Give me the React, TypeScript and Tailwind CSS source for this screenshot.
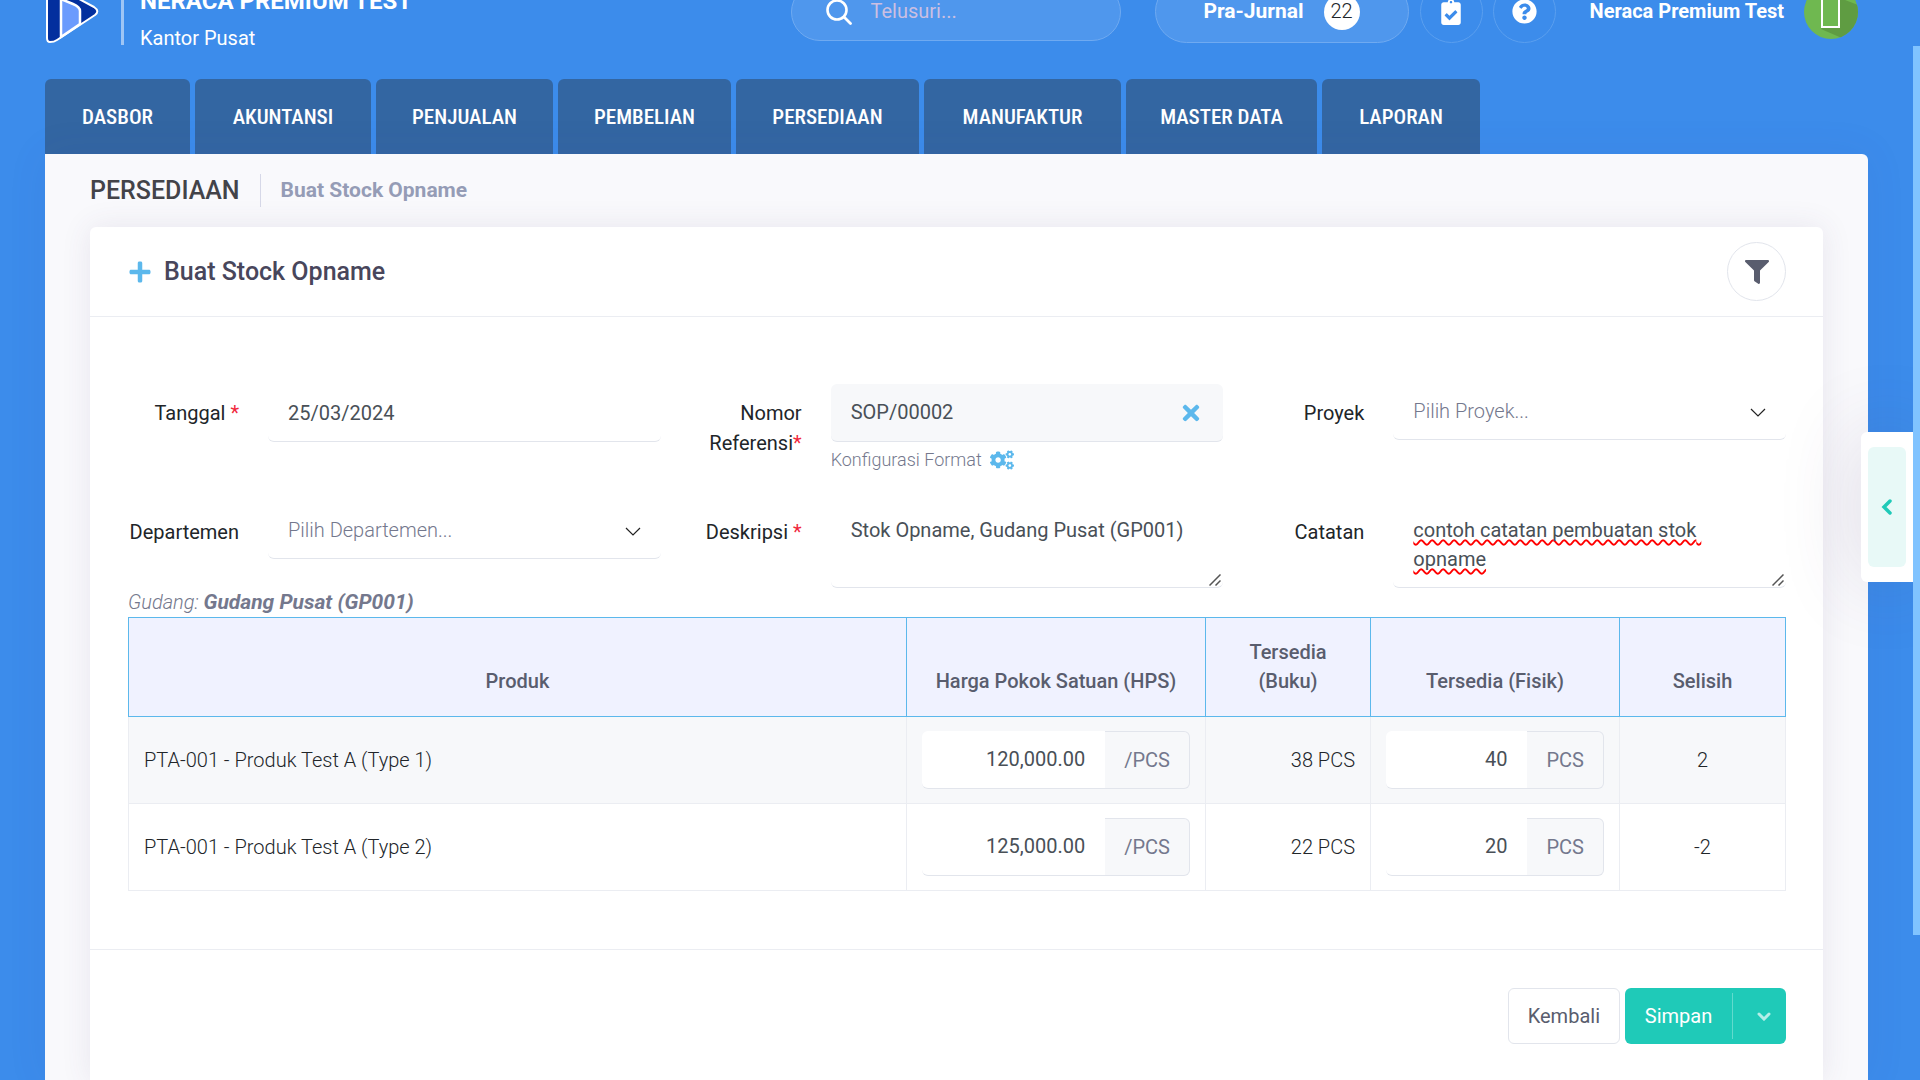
import React from 'react';
import { FaPlus, FaFilter, FaTimes, FaCogs, FaQuestionCircle, FaClipboardCheck } from 'react-icons/fa';

const menuItems = [
  { label: 'DASBOR', width: 'w-[145px]' },
  { label: 'AKUNTANSI', width: 'w-[176px]' },
  { label: 'PENJUALAN', width: 'w-[177px]' },
  { label: 'PEMBELIAN', width: 'w-[173px]' },
  { label: 'PERSEDIAAN', width: 'w-[183px]' },
  { label: 'MANUFAKTUR', width: 'w-[197px]' },
  { label: 'MASTER DATA', width: 'w-[191px]' },
  { label: 'LAPORAN', width: 'w-[158px]' },
];

const rows = [
  { name: 'PTA-001 - Produk Test A (Type 1)', price: '120,000.00', book: '38 PCS', actual: '40', diff: '2' },
  { name: 'PTA-001 - Produk Test A (Type 2)', price: '125,000.00', book: '22 PCS', actual: '20', diff: '-2' },
];

const Logo: React.FC = () => (
  <svg viewBox="0 0 54 72" className="w-[54px] h-[72px] shrink-0" aria-hidden="true">
    <path
      d="M2 15Q2 9 8 12L49 34Q55 38 50 42L12 67Q9 69 5 69Q2 69 2 65Z"
      fill="#032f9e"
      stroke="#fff"
      strokeWidth="2"
      strokeLinejoin="round"
    />
    <path d="M16 64V26L28 31Q35 34 35 38V51Z" fill="#6b9bfd" stroke="#fff" strokeWidth="2.5" />
  </svg>
);

const Avatar: React.FC = () => (
  <svg viewBox="0 0 54 54" className="size-[54px] shrink-0" aria-hidden="true">
    <clipPath id="avatar-clip">
      <circle cx="27" cy="27" r="27" />
    </clipPath>
    <g clipPath="url(#avatar-clip)">
      <rect width="54" height="54" fill="#6fb850" />
      <path d="M36 13L54 20V54H40L17 44Z" fill="#5f9c42" />
      <rect x="17" y="6" width="19" height="37" fill="#fff" />
      <rect x="19" y="10" width="15" height="31" fill="#6fb850" />
    </g>
  </svg>
);

const ResizeGrip: React.FC = () => (
  <svg viewBox="0 0 12 12" className="pointer-events-none absolute bottom-[2px] right-[2px] size-3" aria-hidden="true">
    <path d="M0.5 11.5L11.5 0.5M6.5 11.5L11.5 6.5" fill="none" stroke="#555" strokeWidth="1.5" />
  </svg>
);

const Required: React.FC = () => <span className="text-[#f0283c]">*</span>;

type FieldProps = {
  id: string;
  label: React.ReactNode;
  children: React.ReactNode;
};

const Field: React.FC<FieldProps> = ({ id, label, children }) => (
  <div className="flex gap-[29px]">
    <label htmlFor={id} className="w-[111px] shrink-0 pt-[14px] text-right leading-[30px] text-[#212529]">
      {label}
    </label>
    <div className="relative min-w-0 flex-1">{children}</div>
  </div>
);

type DropdownProps = { id: string; placeholder: string };

const Dropdown: React.FC<DropdownProps> = ({ id, placeholder }) => (
  <div className="relative">
    <select
      id={id}
      className="h-14 w-full appearance-none rounded-md border-b border-[#e2e5ec] bg-white px-5 font-light text-[#74788d] outline-none"
    >
      <option>{placeholder}</option>
    </select>
    <svg viewBox="0 0 16 10" className="pointer-events-none absolute right-5 top-6 h-[10px] w-4" aria-hidden="true">
      <path d="M1 1L8 8L15 1" fill="none" stroke="#222" strokeWidth="1.2" />
    </svg>
  </div>
);

type QuantityProps = { label: string; value: string; unit: string };

const Quantity: React.FC<QuantityProps> = ({ label, value, unit }) => (
  <div className="flex h-[58px]">
    <input
      aria-label={label}
      defaultValue={value}
      className="w-0 min-w-0 flex-1 rounded-l-md border-b border-[#e2e5ec] bg-white pr-5 text-right text-[#495057] outline-none"
    />
    <span className="flex items-center rounded-r-md border-y border-r border-[#e2e5ec] bg-[#f7f8fa] px-[19px] text-[#74788d]">
      {unit}
    </span>
  </div>
);

export default function App() {
  return (
    <div className="relative flex h-screen flex-col overflow-hidden bg-[#3c8ceb] pl-[45px] pr-[52px] font-[Roboto,sans-serif] text-[20px] leading-[29px]">
      {/* Header */}
      <header className="-mt-5 flex items-start text-white">
        <div className="flex items-start pb-[27px]">
          <div className="-mt-[7px]">
            <Logo />
          </div>
          <div className="ml-[22px] h-[65px] w-[3px] bg-[#9ec5f5]" />
          <div className="ml-4 flex flex-col gap-[9px] pt-[7px] leading-7">
            <strong className="text-[24px] font-bold">NERACA PREMIUM TEST</strong>
            <span>Kantor Pusat</span>
          </div>
        </div>
        <div className="ml-auto mr-[10px] flex h-[63px] items-center">
          <label className="mr-[34px] flex h-[58px] w-[330px] items-center rounded-full border border-[#6faaf1] bg-[#4f97ed] pl-[34px]">
            <svg viewBox="0 0 26 26" className="size-[26px] shrink-0" aria-hidden="true">
              <circle cx="11" cy="11" r="9.5" fill="none" stroke="#fff" strokeWidth="2.6" />
              <path d="M18 18L24.5 24.5" stroke="#fff" strokeWidth="2.8" strokeLinecap="round" />
            </svg>
            <input
              aria-label="Telusuri"
              placeholder="Telusuri..."
              className="ml-[19px] w-0 flex-1 bg-transparent outline-none placeholder:text-[#cbbfe2]"
            />
          </label>
          <button className="mr-[11px] flex h-[63px] w-[254px] items-center justify-center gap-5 rounded-full border border-[#6faaf1] bg-[#4f97ed] text-[21px] font-bold">
            Pra-Jurnal
            <span className="flex size-9 items-center justify-center rounded-full bg-white text-[20px] font-light text-[#212529]">22</span>
          </button>
          <button aria-label="Tugas" className="mr-[10px] flex size-[63px] items-center justify-center rounded-full border border-[#5a9fef]">
            <FaClipboardCheck size={26} />
          </button>
          <button aria-label="Bantuan" className="mr-[34px] flex size-[63px] items-center justify-center rounded-full border border-[#5a9fef]">
            <FaQuestionCircle size={25} />
          </button>
          <span className="mr-5 font-bold">Neraca Premium Test</span>
          <Avatar />
        </div>
      </header>

      {/* Menu */}
      <nav className="flex gap-[5px] font-['Roboto_Condensed','Liberation_Sans_Narrow',Roboto,sans-serif] text-[21px] font-medium text-white">
        {menuItems.map((item) => (
          <a
            key={item.label}
            href="#"
            className={`flex h-[75px] items-center justify-center whitespace-nowrap rounded-t-md bg-[#3366a2] pt-[2px] ${item.width}`}
          >
            {item.label}
          </a>
        ))}
      </nav>

      {/* Content */}
      <main className="flex flex-1 flex-col rounded-tr-md bg-[#f9f9fc] px-[45px] shadow-[0_0_40px_rgba(60,60,160,0.08)]">
        <div className="flex h-[73px] shrink-0 items-center">
          <h1 className="text-[25px] font-medium text-[#434349]">PERSEDIAAN</h1>
          <div className="mx-5 h-[33px] w-px bg-[#d6d8e8]" />
          <span className="text-[21px] font-bold text-[#959cb6]">Buat Stock Opname</span>
        </div>

        <section className="flex-1 rounded-t-md bg-white shadow-[0_0_30px_rgba(82,63,105,0.1)]">
          <div className="flex h-[90px] items-center border-b border-[#ebedf2] pl-[38px] pr-[37px]">
            <FaPlus size={24} color="#5cb8ec" />
            <h2 className="ml-3 text-[25px] font-medium text-[#48465b]">Buat Stock Opname</h2>
            <button aria-label="Filter" className="ml-auto flex size-[59px] items-center justify-center rounded-full border border-[#e2e5ec]">
              <FaFilter size={24} color="#595d6e" />
            </button>
          </div>

          <form className="border-b border-[#ebedf2] pb-[58px] pl-[38px] pr-[37px] pt-[67px]">
            <div className="grid grid-cols-3 gap-x-[30px]">
              <Field id="tanggal" label={<>Tanggal <Required /></>}>
                <input
                  id="tanggal"
                  defaultValue="25/03/2024"
                  className="h-[58px] w-full rounded-md border-b border-[#e2e5ec] px-5 text-[#495057] outline-none"
                />
              </Field>
              <Field id="nomor" label={<>Nomor Referensi<Required /></>}>
                <div className="flex h-[58px] items-center rounded-md border-b border-[#e2e5ec] bg-[#f7f8fa] px-5">
                  <input id="nomor" defaultValue="SOP/00002" className="min-w-0 flex-1 bg-transparent text-[#495057] outline-none" />
                  <button type="button" aria-label="Hapus nomor">
                    <FaTimes size={24} color="#5cb8ec" />
                  </button>
                </div>
                <a href="#" className="mt-[3px] flex items-center gap-2 text-[18px] font-light text-[#74788d]">
                  Konfigurasi Format
                  <FaCogs size={24} color="#5cb8ec" />
                </a>
              </Field>
              <Field id="proyek" label="Proyek">
                <Dropdown id="proyek" placeholder="Pilih Proyek..." />
              </Field>
            </div>

            <div className="mt-[29px] grid grid-cols-3 gap-x-[30px]">
              <Field id="departemen" label="Departemen">
                <Dropdown id="departemen" placeholder="Pilih Departemen..." />
              </Field>
              <Field id="deskripsi" label={<>Deskripsi <Required /></>}>
                <textarea
                  id="deskripsi"
                  defaultValue="Stok Opname, Gudang Pusat (GP001)"
                  className="block h-[85px] w-full resize-none rounded-md border-b border-[#e2e5ec] px-5 pt-[13px] text-[#495057] outline-none"
                />
                <ResizeGrip />
              </Field>
              <Field id="catatan" label="Catatan">
                <textarea
                  id="catatan"
                  defaultValue="contoh catatan pembuatan stok opname"
                  className="block h-[85px] w-full resize-none rounded-md border-b border-[#e2e5ec] px-5 pt-[13px] text-[#495057] underline decoration-[#ff0000] decoration-wavy decoration-2 underline-offset-2 outline-none [text-decoration-skip-ink:none]"
                />
                <ResizeGrip />
              </Field>
            </div>

            <p className="font-light italic text-[#74788d]">
              Gudang: <strong className="text-[21px] font-bold">Gudang Pusat (GP001)</strong>
            </p>
            <table className="w-full table-fixed border-collapse font-light text-[#212529]">
              <thead>
                <tr className="bg-[#f0f2ff] align-bottom text-[#595d6e] [&>th]:border [&>th]:border-[#5cb8ec] [&>th]:px-[15px] [&>th]:py-5 [&>th]:font-medium">
                  <th>Produk</th>
                  <th className="w-[299px]">Harga Pokok Satuan (HPS)</th>
                  <th className="w-[165px]">
                    Tersedia
                    <br />
                    (Buku)
                  </th>
                  <th className="w-[249px]">Tersedia (Fisik)</th>
                  <th className="w-[166px]">Selisih</th>
                </tr>
              </thead>
              <tbody>
                {rows.map((row) => (
                  <tr key={row.name} className="odd:bg-[#f7f8fa] [&>td]:border [&>td]:border-[#ebedf2] [&>td]:px-[15px] [&>td]:py-[14px]">
                    <td>{row.name}</td>
                    <td className="font-normal">
                      <Quantity label="Harga Pokok Satuan" value={row.price} unit="/PCS" />
                    </td>
                    <td className="text-right">{row.book}</td>
                    <td className="font-normal">
                      <Quantity label="Tersedia (Fisik)" value={row.actual} unit="PCS" />
                    </td>
                    <td className="text-center">{row.diff}</td>
                  </tr>
                ))}
              </tbody>
            </table>
          </form>

          {/* Action */}
          <div className="flex justify-end gap-[5px] px-[37px] py-[38px]">
            <button className="h-14 rounded-md border border-[#e2e5ec] px-[19px] text-[#595d6e]">Kembali</button>
            <div className="flex h-14 items-center rounded-md bg-[#1fcab8] text-white">
              <button className="h-full w-[107px]">Simpan</button>
              <div className="h-[46px] w-px bg-[#62dacd]" />
              <button aria-label="Opsi simpan" className="flex h-full w-[53px] items-center justify-center pl-2">
                <svg viewBox="0 0 14 9" className="h-[9px] w-[14px]" aria-hidden="true">
                  <path d="M2 2L7 7L12 2" fill="none" stroke="#b5eee8" strokeWidth="3" strokeLinecap="round" />
                </svg>
              </button>
            </div>
          </div>
        </section>
      </main>

      {/* Side panel toggle */}
      <div className="absolute right-[7px] top-[432px] rounded-l-md bg-white py-[15px] pl-[7px] pr-[7px] shadow-[0_0_80px_rgba(82,63,105,0.18)]">
        <button aria-label="Buka panel" className="flex h-[120px] w-[38px] items-center justify-center rounded-md bg-[#e8f9f7]">
          <svg viewBox="0 0 12 16" className="h-4 w-3" aria-hidden="true">
            <path d="M9 2L3 8L9 14" fill="none" stroke="#1fcab8" strokeWidth="3.5" strokeLinecap="round" />
          </svg>
        </button>
      </div>

      {/* Scroll indicator */}
      <div className="absolute right-0 top-[46px] h-[889px] w-[7px] bg-[#80c3ff]" />
    </div>
  );
}
